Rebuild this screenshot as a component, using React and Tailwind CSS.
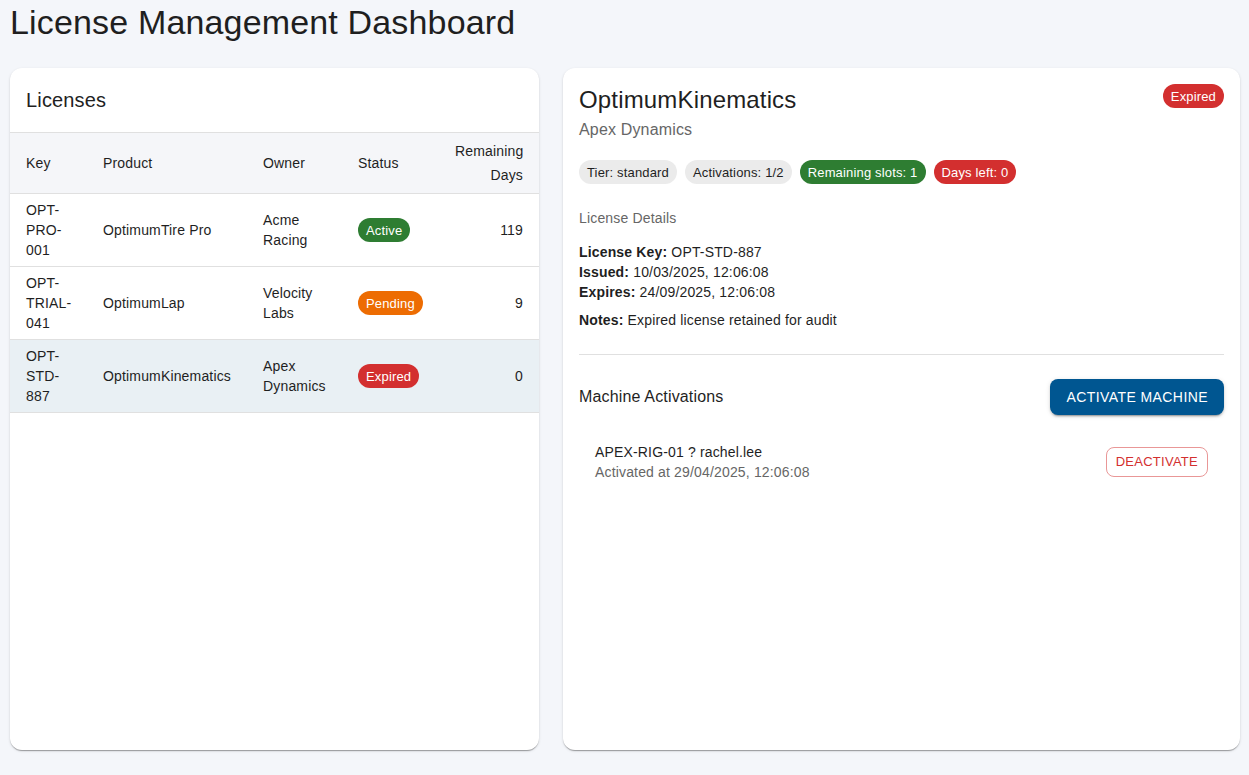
const licenses = [
  { key: 'OPT-PRO-001', product: 'OptimumTire Pro', owner: 'Acme Racing', status: 'Active', days: 119 },
  { key: 'OPT-TRIAL-041', product: 'OptimumLap', owner: 'Velocity Labs', status: 'Pending', days: 9 },
  { key: 'OPT-STD-887', product: 'OptimumKinematics', owner: 'Apex Dynamics', status: 'Expired', days: 0 },
];

const statusColors = {
  Active: 'bg-[#2e7d32]',
  Pending: 'bg-[#ed6c02]',
  Expired: 'bg-[#d32f2f]',
};

function Chip({ label, className }) {
  return (
    <span
      className={`inline-flex h-6 items-center rounded-full px-2 text-[13px] leading-none whitespace-nowrap ${className}`}
    >
      {label}
    </span>
  );
}

const cardShadow =
  'shadow-[0_2px_1px_-1px_rgba(0,0,0,0.2),0_1px_1px_0_rgba(0,0,0,0.14),0_1px_3px_0_rgba(0,0,0,0.12)]';

export default function App() {
  const selected = 'OPT-STD-887';

  return (
    <div
      className="min-h-screen bg-[#f4f6fa] pl-[10px] pr-[9px] pt-px text-[#1f1f1f] tracking-[0.01em]"
      style={{ fontFamily: '"Liberation Sans", Arial, sans-serif' }}
    >
      <h1 className="text-[34px] leading-[42px] font-normal mb-[25px]">
        License Management Dashboard
      </h1>

      <div className="flex gap-6">
        {/* Licenses table */}
        <div className={`w-[529px] h-[682px] bg-white rounded-xl overflow-hidden ${cardShadow}`}>
          <div className="px-4 py-4">
            <h2 className="text-[20px] leading-8 font-normal">Licenses</h2>
          </div>
          <table className="w-full table-fixed border-collapse text-sm">
            <colgroup>
              <col className="w-[77px]" />
              <col className="w-[160px]" />
              <col className="w-[95px]" />
              <col className="w-[97px]" />
              <col />
            </colgroup>
            <thead>
              <tr className="bg-[#f5f6f9] border-t border-b border-[#e0e0e0]">
                <th className="px-4 py-[6px] text-left font-normal leading-6">Key</th>
                <th className="px-4 py-[6px] text-left font-normal leading-6">Product</th>
                <th className="px-4 py-[6px] text-left font-normal leading-6">Owner</th>
                <th className="px-4 py-[6px] text-left font-normal leading-6">Status</th>
                <th className="px-4 py-[6px] text-right font-normal leading-6">Remaining Days</th>
              </tr>
            </thead>
            <tbody>
              {licenses.map((l) => (
                <tr
                  key={l.key}
                  className={`border-b border-[#e0e0e0] ${l.key === selected ? 'bg-[#e9f0f4]' : ''}`}
                >
                  <td className="pl-4 pr-3 py-[6px] leading-5 break-words">{l.key}</td>
                  <td className="px-4 py-[6px] leading-5">{l.product}</td>
                  <td className="px-4 py-[6px] leading-5">{l.owner}</td>
                  <td className="px-4 py-[6px] leading-5">
                    <Chip label={l.status} className={`${statusColors[l.status]} text-white`} />
                  </td>
                  <td className="px-4 py-[6px] leading-5 text-right">{l.days}</td>
                </tr>
              ))}
            </tbody>
          </table>
        </div>

        {/* Detail card */}
        <div className={`flex-1 h-[682px] bg-white rounded-xl p-4 ${cardShadow}`}>
          <div className="flex items-start justify-between">
            <div>
              <h2 className="text-2xl leading-8 font-normal">OptimumKinematics</h2>
              <p className="text-base leading-7 text-[#666]">Apex Dynamics</p>
            </div>
            <Chip label="Expired" className="bg-[#d32f2f] text-white" />
          </div>

          <div className="mt-4 flex gap-2">
            <Chip label="Tier: standard" className="bg-[#ebebeb] text-[#1f1f1f]" />
            <Chip label="Activations: 1/2" className="bg-[#ebebeb] text-[#1f1f1f]" />
            <Chip label="Remaining slots: 1" className="bg-[#2e7d32] text-white" />
            <Chip label="Days left: 0" className="bg-[#d32f2f] text-white" />
          </div>

          <p className="mt-6 text-sm leading-5 text-[#666]">License Details</p>
          <div className="mt-[14px] text-sm leading-5">
            <p>
              <strong className="font-bold">License Key:</strong> OPT-STD-887
            </p>
            <p>
              <strong className="font-bold">Issued:</strong> 10/03/2025, 12:06:08
            </p>
            <p>
              <strong className="font-bold">Expires:</strong> 24/09/2025, 12:06:08
            </p>
            <p className="mt-2">
              <strong className="font-bold">Notes:</strong> Expired license retained for audit
            </p>
          </div>

          <hr className="mt-6 border-[#e0e0e0]" />

          <div className="mt-6 flex items-center justify-between">
            <h3 className="text-base leading-6 font-normal">Machine Activations</h3>
            <button className="h-9 rounded-lg bg-[#005691] px-4 text-sm font-medium uppercase tracking-[0.03em] text-white shadow-[0_3px_1px_-2px_rgba(0,0,0,0.2),0_2px_2px_0_rgba(0,0,0,0.14),0_1px_5px_0_rgba(0,0,0,0.12)]">
              Activate Machine
            </button>
          </div>

          <ul className="mt-[19px]">
            <li className="flex items-center justify-between px-4 py-2">
              <div className="text-sm leading-5">
                <p>APEX-RIG-01 ? rachel.lee</p>
                <p className="text-[#666]">Activated at 29/04/2025, 12:06:08</p>
              </div>
              <button className="h-[30px] rounded-lg border border-[#e99797] px-[9px] text-[13px] uppercase tracking-[0.02em] text-[#d32f2f]">
                Deactivate
              </button>
            </li>
          </ul>
        </div>
      </div>
    </div>
  );
}
